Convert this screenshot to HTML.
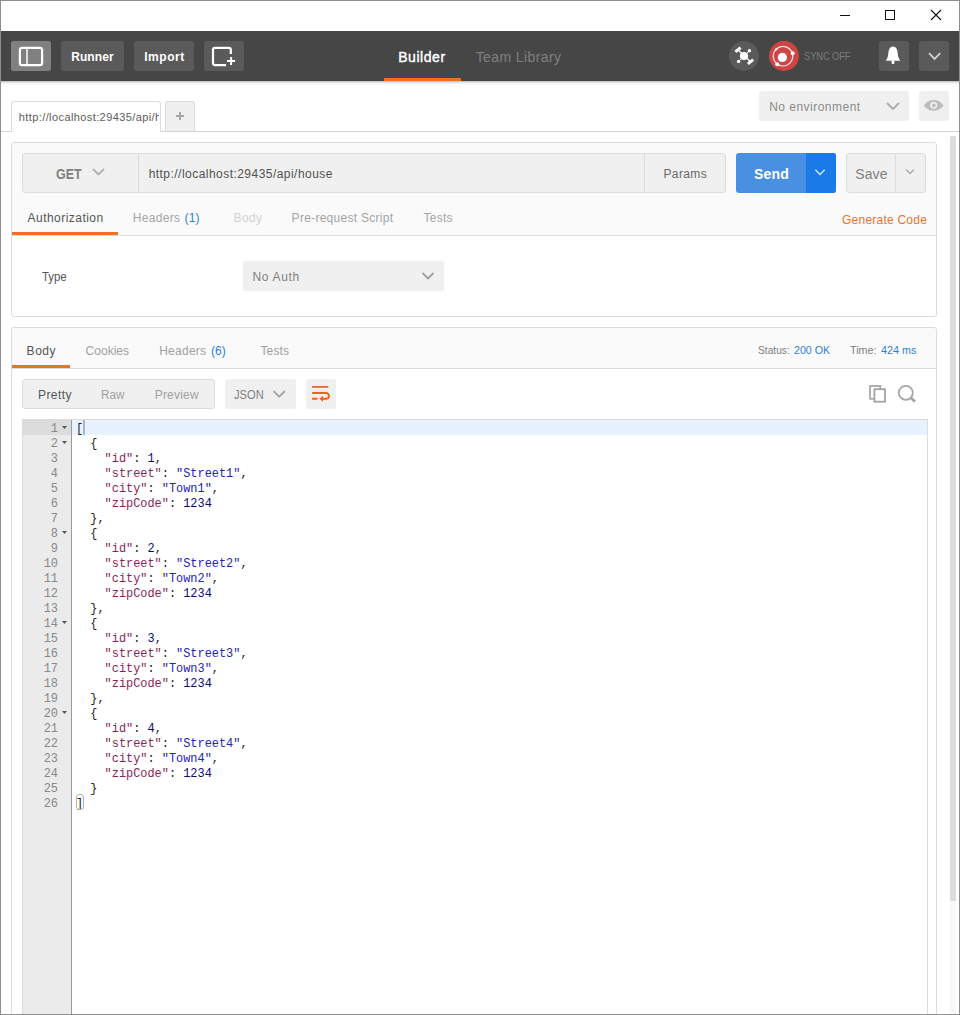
<!DOCTYPE html>
<html lang="en">
<head>
<meta charset="utf-8">
<title>Postman</title>
<style>
*{box-sizing:border-box;margin:0;padding:0}
html,body{width:960px;height:1015px;overflow:hidden;background:#fff}
body{position:relative;font-family:"Liberation Sans",sans-serif}
.a{position:absolute}
.t{position:absolute;white-space:pre;line-height:1;transform-origin:0 0;font-family:"Liberation Sans",sans-serif}
#win{left:0;top:0;width:960px;height:1015px;border:1px solid #8f8f8f;z-index:50;pointer-events:none}
#hdr{left:1px;top:31px;width:958px;height:50px;background:#464646}
.sh{left:1px;width:958px;height:1px;background:#000}
.hb{top:41px;height:30px;background:#5a5a5a;border-radius:2.500px}
.gb{background:#f0f0f0;border-radius:2.500px}
.panel{left:11px;width:926px;border:1px solid #dcdcdc;border-radius:3px;background:#fff}
.ln{height:15px;line-height:15px;text-align:right;padding-right:13px;position:relative}
.ln i{position:absolute;right:4px;top:4px;width:5px;height:3px;background:#555;clip-path:polygon(0 0,100% 0,50% 100%)}
.cl{height:15px;line-height:15px;white-space:pre}
.k{color:#8a1f5a}.s{color:#2323bd}.n{color:#0b0b7a}
</style>
</head>
<body>
<!-- window chrome -->
<div class="a" id="win"></div>
<svg class="a" style="left:830px;top:5px" width="120" height="22" viewBox="0 0 120 22">
 <path d="M10 10.5h10" stroke="#111" stroke-width="1" fill="none"/>
 <rect x="55.5" y="5.5" width="9" height="9" stroke="#111" stroke-width="1" fill="none"/>
 <path d="M101 5l10 10M111 5l-10 10" stroke="#111" stroke-width="1.1" fill="none"/>
</svg>
<!-- header -->
<div class="a" id="hdr"></div>
<div class="a sh" style="top:81px;opacity:.22"></div><div class="a sh" style="top:82px;opacity:.11"></div><div class="a sh" style="top:83px;opacity:.045"></div><div class="a sh" style="top:84px;opacity:.015"></div>
<div class="a hb" style="left:11px;width:40px;background:#808080"></div>
<div class="a hb" style="left:61px;width:63px"></div>
<div class="a hb" style="left:134px;width:60px"></div>
<div class="a hb" style="left:204px;width:40px"></div>
<svg class="a" style="left:11px;top:41px" width="40" height="30" viewBox="0 0 40 30">
 <rect x="8.900" y="6.800" width="22.200" height="17.300" rx="2.200" fill="none" stroke="#fff" stroke-width="2.200"/>
 <path d="M16 7v17" stroke="#fff" stroke-opacity=".92" stroke-width="1.600"/>
</svg>
<svg class="a" style="left:204px;top:41px" width="40" height="30" viewBox="0 0 40 30">
 <path d="M26.800 13V8.800a2 2 0 0 0-2-2H11a2 2 0 0 0-2 2v13.300a2 2 0 0 0 2 2h11" fill="none" stroke="#fff" stroke-width="2.200"/>
 <path d="M27.100 16v8M23.100 20h8" stroke="#fff" stroke-width="2"/>
</svg>
<div class="a" style="left:384px;top:78px;width:77px;height:3px;background:#ee7226"></div>
<!-- satellite + sync -->
<div class="a" style="left:729px;top:41px;width:30px;height:30px;border-radius:15px;background:#5a5a5a"></div>
<svg class="a" style="left:729px;top:41px" width="30" height="30" viewBox="0 0 30 30">
 <path d="M9.600 20.400L20.400 9.800" stroke="#fff" stroke-width="1" fill="none"/>
 <path d="M9 8.800L21.500 20.800" stroke="#fff" stroke-width="1.200" fill="none"/>
 <path d="M6.400 10.900l5.200-4.300M18.900 22.900l5.200-4.300" stroke="#fff" stroke-width="3" fill="none"/>
 <circle cx="15" cy="15" r="4.100" fill="#fff"/>
 <circle cx="20.400" cy="9.800" r="1.700" fill="#fff"/>
 <circle cx="9.600" cy="20.400" r="1.700" fill="#fff"/>
</svg>
<div class="a" style="left:769px;top:41px;width:30px;height:30px;border-radius:15px;background:#cf4545"></div>
<svg class="a" style="left:769px;top:41px" width="30" height="30" viewBox="0 0 30 30">
 <circle cx="14" cy="15.200" r="9.800" fill="none" stroke="#fbe9e9" stroke-width="1.200"/>
 <circle cx="13.400" cy="16.400" r="4.600" fill="#fff"/>
 <circle cx="23.700" cy="12.200" r="2" fill="#fff"/>
 <circle cx="8.300" cy="23.200" r="2" fill="#fff"/>
 <circle cx="7.100" cy="8.400" r="1.200" fill="#fbe9e9"/>
</svg>
<div class="a hb" style="left:879px;width:30px"></div>
<div class="a hb" style="left:919px;width:30px"></div>
<svg class="a" style="left:879px;top:41px" width="30" height="30" viewBox="0 0 30 30">
 <path d="M14 5.600c-1.700 0-3 0.900-3.700 2.400-0.800 1.700-0.900 3.900-1.200 6.100-0.300 1.900-0.900 3.500-2.400 5.700h14.600c-1.500-2.200-2.100-3.800-2.400-5.700-0.300-2.200-0.400-4.400-1.200-6.100-0.700-1.500-2-2.400-3.700-2.400z" fill="#fff"/>
 <rect x="12.600" y="19.500" width="2.800" height="3.400" rx="1" fill="#fff"/>
</svg>
<svg class="a" style="left:919px;top:41px" width="30" height="30" viewBox="0 0 30 30">
 <path d="M10 12.200l5.600 5.600 5.600-5.600" fill="none" stroke="#d0d0d0" stroke-width="1.900"/>
</svg>
<!-- env -->
<div class="a gb" style="left:759px;top:91px;width:150px;height:30px"></div>
<svg class="a" style="left:884.500px;top:99.700px" width="16" height="12" viewBox="0 0 16 12"><path d="M2 3l6 6 6-6" fill="none" stroke="#adadad" stroke-width="1.900"/></svg>
<div class="a gb" style="left:919px;top:91px;width:30px;height:30px"></div>
<svg class="a" style="left:919px;top:91px" width="30" height="30" viewBox="0 0 30 30">
 <path d="M4.800 14.400c2.600-3.700 6.200-5.400 9.900-5.400s7.300 1.700 9.900 5.400c-2.600 3.700-6.200 5.400-9.900 5.400s-7.300-1.700-9.900-5.400z" fill="#bdbdbd"/>
 <circle cx="14.700" cy="14.200" r="3.500" fill="#f0f0f0"/>
 <circle cx="14.900" cy="14.300" r="1.900" fill="#bdbdbd"/>
</svg>
<!-- request tabs -->
<div class="a" style="left:1px;top:131px;width:958px;height:1px;background:#d4d4d4"></div>
<div class="a" style="left:11px;top:101px;width:150px;height:31px;background:#fff;border:1px solid #dcdcdc;border-bottom:none;border-radius:3px 3px 0 0"></div>
<div class="a" style="left:165px;top:101px;width:30px;height:30px;background:#f0f0f0;border:1px solid #dcdcdc;border-bottom:none;border-radius:3px 3px 0 0"></div>
<svg class="a" style="left:174px;top:110px" width="12" height="12" viewBox="0 0 12 12"><path d="M6 2v8M2 6h8" stroke="#a8a8a8" stroke-width="2"/></svg>
<!-- scrollbar -->
<div class="a" style="left:950px;top:136px;width:6px;height:765px;background:#dcdcdc;border-radius:1.500px"></div>
<div class="a" style="left:950px;top:901px;width:6px;height:113px;background:#f8f8f8"></div>
<!-- request panel -->
<div class="a panel" style="top:142px;height:175px"></div>
<div class="a" style="left:12px;top:143px;width:924px;height:93px;background:#fafafa;border-bottom:1px solid #dcdcdc;border-radius:3px 3px 0 0"></div>
<div class="a" style="left:22px;top:153px;width:704px;height:40px;background:#f0f0f0;border:1px solid #dcdcdc;border-radius:3px"></div>
<div class="a" style="left:138px;top:154px;width:1px;height:38px;background:#dcdcdc"></div>
<div class="a" style="left:644px;top:154px;width:1px;height:38px;background:#dcdcdc"></div>
<svg class="a" style="left:91px;top:166.400px" width="16" height="12" viewBox="0 0 16 12"><path d="M2 3l5.500 5.500L13 3" fill="none" stroke="#b0b0b0" stroke-width="1.800"/></svg>
<div class="a" style="left:736px;top:153px;width:100px;height:40px;background:#4a90e2;border-radius:3px"></div>
<div class="a" style="left:806px;top:153px;width:30px;height:40px;background:#1a7be8;border-radius:0 3px 3px 0"></div>
<svg class="a" style="left:812px;top:166px" width="16" height="12" viewBox="0 0 16 12"><path d="M3.300 3.700l4.700 4.700 4.700-4.700" fill="none" stroke="#d6e6fa" stroke-width="1.400"/></svg>
<div class="a" style="left:846px;top:153px;width:80px;height:40px;background:#f0f0f0;border:1px solid #dcdcdc;border-radius:3px"></div>
<div class="a" style="left:895px;top:154px;width:1px;height:38px;background:#dcdcdc"></div>
<svg class="a" style="left:902px;top:166px" width="16" height="12" viewBox="0 0 16 12"><path d="M4 3.500l4 4 4-4" fill="none" stroke="#a8a8a8" stroke-width="1.300"/></svg>
<div class="a" style="left:12px;top:232px;width:106px;height:3px;background:#ee7226"></div>
<div class="a gb" style="left:243px;top:261px;width:201px;height:30px"></div>
<svg class="a" style="left:420px;top:270px" width="16" height="12" viewBox="0 0 16 12"><path d="M2.500 3l5.500 5.500L13.500 3" fill="none" stroke="#a0a0a0" stroke-width="1.800"/></svg>
<!-- response panel -->
<div class="a panel" style="top:327px;height:700px;border-radius:3px 3px 0 0"></div>
<div class="a" style="left:12px;top:328px;width:924px;height:41px;background:#fafafa;border-bottom:1px solid #dcdcdc;border-radius:3px 3px 0 0"></div>
<div class="a" style="left:12px;top:365px;width:58px;height:3px;background:#ee7226"></div>
<div class="a" style="left:22px;top:379px;width:193px;height:30px;background:#f0f0f0;border:1px solid #dcdcdc;border-radius:3px"></div>
<div class="a gb" style="left:225px;top:379px;width:71px;height:30px"></div>
<svg class="a" style="left:271px;top:388px" width="16" height="12" viewBox="0 0 16 12"><path d="M2.500 3l5.700 5.700L13.900 3" fill="none" stroke="#a6a6a6" stroke-width="1.900"/></svg>
<div class="a gb" style="left:306px;top:379px;width:30px;height:30px"></div>
<svg class="a" style="left:306px;top:379px" width="30" height="30" viewBox="0 0 30 30">
 <path d="M6.100 7.900H22.300M6.100 14H20a2.900 2.900 0 0 1 0 5.800H16.500M6.100 19.800H11.500" fill="none" stroke="#e8651d" stroke-width="1.900"/>
 <path d="M17 16.800l-3.600 3 3.600 3z" fill="#e8651d"/>
</svg>
<svg class="a" style="left:866px;top:382px" width="54" height="24" viewBox="0 0 54 24">
 <rect x="4" y="4" width="10.300" height="12.800" fill="#fff" stroke="#a9a9a9" stroke-width="1.800"/>
 <rect x="8.400" y="7.200" width="10.600" height="12.500" fill="#fff" stroke="#a3a3a3" stroke-width="1.800"/>
 <circle cx="39.800" cy="10.800" r="7" fill="none" stroke="#a6a6a6" stroke-width="1.800"/>
 <path d="M44.800 15.700l4.200 3.900" stroke="#a6a6a6" stroke-width="2.800"/>
</svg>
<!-- editor -->
<div class="a" style="left:22px;top:419px;width:906px;height:600px;border:1px solid #dcdcdc;border-bottom:none"></div>
<div class="a" style="left:72px;top:420px;width:855px;height:15px;background:#e8f2fe"></div>
<div class="a" style="left:23px;top:420px;width:48px;height:600px;background:#ebebeb"></div>
<div class="a" style="left:23px;top:420px;width:48px;height:15px;background:#dcdcdc"></div>
<div class="a" style="left:71px;top:420px;width:1px;height:600px;background:#9a9a9a"></div>
<div class="a" style="left:23px;top:422px;width:48px;font-family:'Liberation Mono',monospace;font-size:11.910px;color:#888"><div class="ln">1<i></i></div><div class="ln">2<i></i></div><div class="ln">3</div><div class="ln">4</div><div class="ln">5</div><div class="ln">6</div><div class="ln">7</div><div class="ln">8<i></i></div><div class="ln">9</div><div class="ln">10</div><div class="ln">11</div><div class="ln">12</div><div class="ln">13</div><div class="ln">14<i></i></div><div class="ln">15</div><div class="ln">16</div><div class="ln">17</div><div class="ln">18</div><div class="ln">19</div><div class="ln">20<i></i></div><div class="ln">21</div><div class="ln">22</div><div class="ln">23</div><div class="ln">24</div><div class="ln">25</div><div class="ln">26</div></div>
<div class="a" style="left:76px;top:422px;font-family:'Liberation Mono',monospace;font-size:11.910px;color:#222"><div class="cl">[</div><div class="cl">  {</div><div class="cl">    <span class="k">"id"</span>: <span class="n">1</span>,</div><div class="cl">    <span class="k">"street"</span>: <span class="s">"Street1"</span>,</div><div class="cl">    <span class="k">"city"</span>: <span class="s">"Town1"</span>,</div><div class="cl">    <span class="k">"zipCode"</span>: <span class="n">1234</span></div><div class="cl">  },</div><div class="cl">  {</div><div class="cl">    <span class="k">"id"</span>: <span class="n">2</span>,</div><div class="cl">    <span class="k">"street"</span>: <span class="s">"Street2"</span>,</div><div class="cl">    <span class="k">"city"</span>: <span class="s">"Town2"</span>,</div><div class="cl">    <span class="k">"zipCode"</span>: <span class="n">1234</span></div><div class="cl">  },</div><div class="cl">  {</div><div class="cl">    <span class="k">"id"</span>: <span class="n">3</span>,</div><div class="cl">    <span class="k">"street"</span>: <span class="s">"Street3"</span>,</div><div class="cl">    <span class="k">"city"</span>: <span class="s">"Town3"</span>,</div><div class="cl">    <span class="k">"zipCode"</span>: <span class="n">1234</span></div><div class="cl">  },</div><div class="cl">  {</div><div class="cl">    <span class="k">"id"</span>: <span class="n">4</span>,</div><div class="cl">    <span class="k">"street"</span>: <span class="s">"Street4"</span>,</div><div class="cl">    <span class="k">"city"</span>: <span class="s">"Town4"</span>,</div><div class="cl">    <span class="k">"zipCode"</span>: <span class="n">1234</span></div><div class="cl">  }</div><div class="cl">]</div></div>
<div class="a" style="left:83px;top:420px;width:2px;height:15px;background:#aab6c8"></div>
<div class="a" style="left:75.500px;top:794px;width:8.500px;height:16px;border:1px solid #b4b4b4;border-radius:3px"></div>
<!-- texts -->
<span class="t" style="left:71.15px;top:51.44px;font-size:12px;color:#fff;letter-spacing:0.1px;font-weight:700;">Runner</span>
<span class="t" style="left:144.15px;top:51.44px;font-size:12px;color:#fff;letter-spacing:0.56px;font-weight:700;">Import</span>
<span class="t" style="left:398.20px;top:50.25px;font-size:14px;color:#fff;letter-spacing:0.55px;-webkit-text-stroke:0.4px #fff;">Builder</span>
<span class="t" style="left:475.65px;top:50.25px;font-size:14px;color:#808080;letter-spacing:0.4px;">Team Library</span>
<span class="t" style="left:803.84px;top:51.73px;font-size:10px;color:#7c7c7c;transform:scaleX(0.9186);">SYNC OFF</span>
<span class="t" style="left:769.20px;top:100.54px;font-size:12px;color:#8a8a8a;letter-spacing:0.481px;">No environment</span>
<span class="t" style="left:18.75px;top:111.69px;font-size:11px;color:#5c5c5c;letter-spacing:0.405px;width:140.30px;overflow:hidden;">http://localhost:29435/api/house</span>
<span class="t" style="left:56.35px;top:167.15px;font-size:14px;color:#808080;transform:scaleX(0.892);font-weight:700;">GET</span>
<span class="t" style="left:148.65px;top:167.84px;font-size:12px;color:#505050;letter-spacing:0.463px;">http://localhost:29435/api/house</span>
<span class="t" style="left:663.50px;top:167.84px;font-size:12px;color:#686868;letter-spacing:0.36px;">Params</span>
<span class="t" style="left:753.90px;top:167.15px;font-size:14px;color:#fff;letter-spacing:0.217px;font-weight:700;">Send</span>
<span class="t" style="left:855.25px;top:167.15px;font-size:14px;color:#808080;letter-spacing:0.1px;">Save</span>
<span class="t" style="left:27.60px;top:211.84px;font-size:12px;color:#555555;letter-spacing:0.454px;">Authorization</span>
<span class="t" style="left:132.80px;top:211.84px;font-size:12px;color:#a4a4a4;letter-spacing:0.3px;">Headers</span>
<span class="t" style="left:184.45px;top:211.84px;font-size:12px;color:#2f7fd8;letter-spacing:0.225px;">(1)</span>
<span class="t" style="left:233.60px;top:211.84px;font-size:12px;color:#d2d2d2;letter-spacing:0.383px;">Body</span>
<span class="t" style="left:291.60px;top:211.84px;font-size:12px;color:#a4a4a4;letter-spacing:0.279px;">Pre-request Script</span>
<span class="t" style="left:423.45px;top:211.84px;font-size:12px;color:#a4a4a4;letter-spacing:0.263px;">Tests</span>
<span class="t" style="left:842.00px;top:213.84px;font-size:12px;color:#e8742c;letter-spacing:0.233px;">Generate Code</span>
<span class="t" style="left:42.06px;top:270.84px;font-size:12px;color:#555555;transform:scaleX(0.9465);">Type</span>
<span class="t" style="left:252.40px;top:270.84px;font-size:12px;color:#808080;letter-spacing:0.683px;">No Auth</span>
<span class="t" style="left:26.60px;top:344.84px;font-size:12px;color:#555555;letter-spacing:0.55px;">Body</span>
<span class="t" style="left:85.60px;top:344.84px;font-size:12px;color:#a0a0a0;letter-spacing:0.017px;">Cookies</span>
<span class="t" style="left:159.20px;top:344.84px;font-size:12px;color:#a0a0a0;letter-spacing:0.25px;">Headers</span>
<span class="t" style="left:211.05px;top:344.84px;font-size:12px;color:#2f7fd8;letter-spacing:0.075px;">(6)</span>
<span class="t" style="left:260.45px;top:344.84px;font-size:12px;color:#a0a0a0;letter-spacing:0.163px;">Tests</span>
<span class="t" style="left:757.74px;top:344.69px;font-size:11px;color:#808080;transform:scaleX(0.9282);">Status:</span>
<span class="t" style="left:794.12px;top:344.69px;font-size:11px;color:#2f7fd8;transform:scaleX(0.9644);">200 OK</span>
<span class="t" style="left:850.36px;top:344.69px;font-size:11px;color:#808080;transform:scaleX(0.9769);">Time:</span>
<span class="t" style="left:880.76px;top:344.69px;font-size:11px;color:#2f7fd8;transform:scaleX(0.9775);">424 ms</span>
<span class="t" style="left:38.00px;top:389.04px;font-size:12px;color:#555555;letter-spacing:0.41px;">Pretty</span>
<span class="t" style="left:101.13px;top:389.04px;font-size:12px;color:#a0a0a0;transform:scaleX(0.9739);">Raw</span>
<span class="t" style="left:154.70px;top:389.04px;font-size:12px;color:#a0a0a0;letter-spacing:0.208px;">Preview</span>
<span class="t" style="left:233.67px;top:389.04px;font-size:12px;color:#808080;transform:scaleX(0.9268);">JSON</span>
</body>
</html>
